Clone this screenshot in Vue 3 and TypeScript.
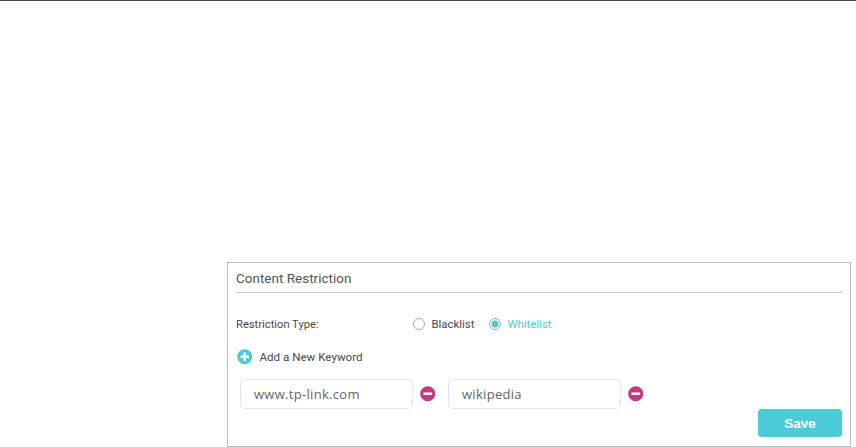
<script setup lang="ts">
import { ref } from 'vue'

const types = ['Blacklist', 'Whitelist']
const active = ref('Whitelist')
const keywords = ref(['www.tp-link.com', 'wikipedia'])
</script>

<template>
  <div class="page">
    <div class="topline"></div>
    <section class="panel">
      <h3 class="title">Content Restriction</h3>
      <div class="type-row">
        <span class="type-label">Restriction Type:</span>
        <label v-for="t in types" :key="t" class="radio" :class="{ on: t === active }" @click="active = t">
          <i class="dot"></i>
          <span>{{ t }}</span>
        </label>
      </div>
      <div class="add-row">
        <svg class="icon" viewBox="0 0 16 16">
          <circle cx="8" cy="8" r="7.8" fill="#4acbd6" />
          <path d="M8 3.6v8.8M3.6 8h8.8" stroke="#fff" stroke-width="2.6" fill="none" />
        </svg>
        <span>Add a New Keyword</span>
      </div>
      <div class="keywords">
        <div v-for="k in keywords" :key="k" class="keyword">
          <input class="kw-input" :value="k" />
          <svg class="icon" viewBox="0 0 16 16">
            <circle cx="8" cy="8" r="7.8" fill="#c9397d" />
            <path d="M3.6 8h8.8" stroke="#fff" stroke-width="2.6" fill="none" />
          </svg>
        </div>
      </div>
      <div class="actions">
        <button class="save">Save</button>
      </div>
    </section>
  </div>
</template>

<style>
html, body { margin: 0; background: #fff; }
</style>

<style scoped>
.page { width: 856px; height: 447px; overflow: hidden; display: flex; flex-direction: column; font-family: Roboto, "Liberation Sans", Arial, sans-serif; }
.topline { height: 1px; background: #4a4a4a; flex: none; }
.panel { box-sizing: border-box; width: 624px; height: 185px; margin: 261px 0 0 227px; border: 1px solid #bdbdbd; padding: 0 8px 0 8px; flex: none; }
.title { margin: 0; height: 29px; line-height: 31px; font-size: 13.5px; font-weight: 400; color: #555; border-bottom: 1px solid #c8c8c8; }
.type-row { display: flex; align-items: center; height: 16px; margin-top: 23px; font-size: 11.4px; color: #4a4a4a; }
.type-label { width: 177px; font-size: 11.2px; }
.radio { display: flex; align-items: center; gap: 6.5px; margin-right: 14.5px; cursor: pointer; }
.radio.on { color: #4acbd6; }
.dot { box-sizing: border-box; width: 12px; height: 12px; border-radius: 50%; border: 1px solid #a9a9a9; background: #fff; }
.radio.on .dot { background: radial-gradient(circle, #4acbd6 3.2px, #fff 3.9px); }
.add-row { display: flex; align-items: center; gap: 7px; height: 16px; margin-top: 17px; padding-left: 1px; font-size: 11.6px; color: #4a4a4a; }
.icon { flex: none; width: 15.5px; height: 15.5px; }
.keywords { display: flex; gap: 13px; margin-top: 14px; padding-left: 4px; }
.keyword { display: flex; align-items: center; gap: 6.5px; }
.kw-input { box-sizing: border-box; width: 173px; height: 30px; border: 1px solid #e6e6e6; border-radius: 5px; padding: 0 13px; font-family: "Open Sans", sans-serif; font-size: 13px; letter-spacing: 0.3px; color: #666; outline: none; background: #fff; }
.actions { display: flex; justify-content: flex-end; }
.save { width: 84px; height: 28px; border: 0; border-radius: 4px; background: #4acbd6; color: #fff; font-family: "Liberation Sans", Arial, sans-serif; font-size: 13.5px; font-weight: 700; padding: 0; cursor: pointer; }
</style>
